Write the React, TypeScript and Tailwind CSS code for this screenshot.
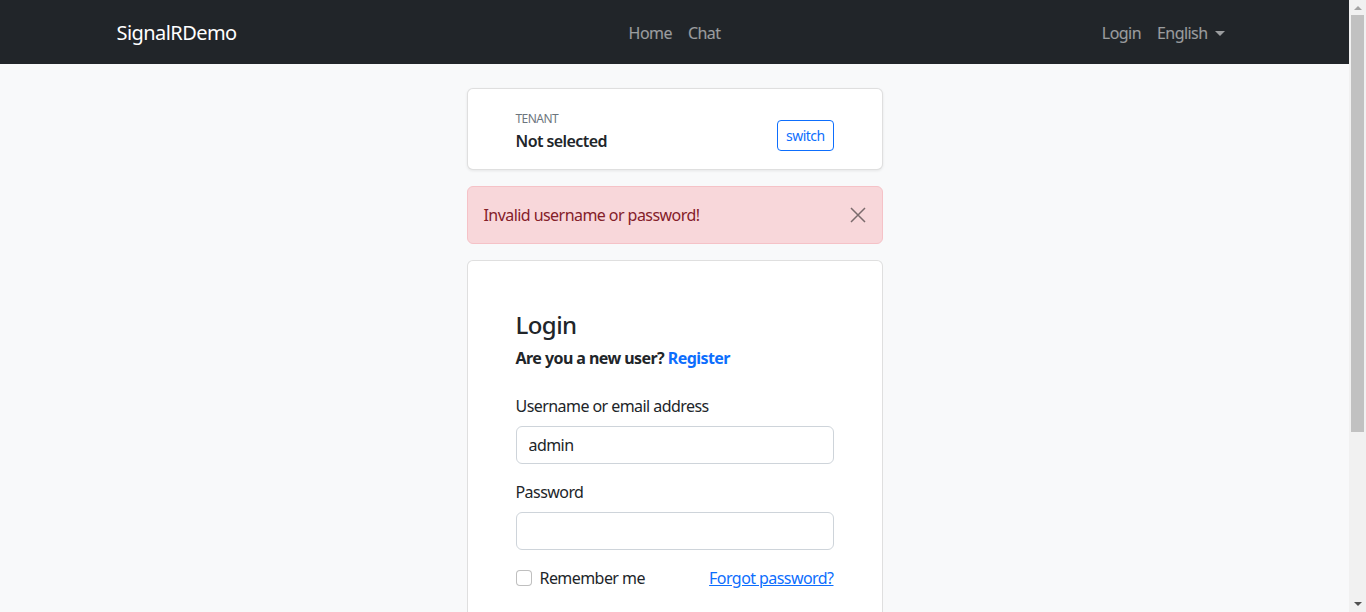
import { useState } from "react";

function NavBar() {
  return (
    <nav className="h-16 bg-[#212529]">
      <div className="mx-auto grid h-full max-w-[1140px] grid-cols-[1fr_auto_1fr] items-center px-3 pt-[2px]">
        <a href="#" className="justify-self-start text-[20px] leading-[30px] text-white">
          SignalRDemo
        </a>
        <ul className="flex items-center">
          <li>
            <a href="#" className="px-2 text-[16px] text-white/55">
              Home
            </a>
          </li>
          <li>
            <a href="#" className="px-2 text-[16px] text-white/55">
              Chat
            </a>
          </li>
        </ul>
        <ul className="flex items-center justify-self-end">
          <li>
            <a href="#" className="px-2 text-[16px] text-white/55">
              Login
            </a>
          </li>
          <li>
            <a href="#" className="flex items-center px-2 text-[16px] text-white/55">
              English
              <span className="ml-[7px] mt-[1px] h-0 w-0 border-x-[5px] border-t-[5px] border-x-transparent border-t-white/55" />
            </a>
          </li>
        </ul>
      </div>
    </nav>
  );
}

function TenantCard() {
  return (
    <div className="mb-4 rounded-md border border-black/[0.125] bg-white shadow-[0_1px_3px_rgba(0,0,0,0.08)]">
      <div className="flex items-end justify-between px-12 pb-4 pt-[21px]">
        <div>
          <div className="text-[12px] uppercase leading-[18px] text-[#6c757d]">Tenant</div>
          <div className="mt-[1px] text-[16px] font-semibold leading-[24px] text-[#212529]">
            Not selected
          </div>
        </div>
        <button
          type="button"
          className="mb-[2px] rounded-[4px] border border-[#0d6efd] px-2 py-1 text-[14px] leading-[21px] text-[#0d6efd]"
        >
          switch
        </button>
      </div>
    </div>
  );
}

function ErrorAlert() {
  const [open, setOpen] = useState(true);
  if (!open) return null;
  return (
    <div className="mb-4 flex items-center justify-between rounded-md border border-[#f5c2c7] bg-[#f8d7da] p-4 text-[16px] leading-[24px] text-[#842029]">
      <span>Invalid username or password!</span>
      <button type="button" onClick={() => setOpen(false)} className="p-0 opacity-50">
        <svg width="16" height="16" viewBox="0 0 16 16" fill="none" stroke="#000" strokeWidth="1.5">
          <path d="M1 1l14 14M15 1L1 15" />
        </svg>
      </button>
    </div>
  );
}

function LoginCard() {
  return (
    <div className="rounded-md border border-black/[0.125] bg-white">
      <div className="p-12">
        <h4 className="mb-[7px] mt-[1px] text-[24px] font-medium leading-[29px] text-[#212529]">Login</h4>
        <p className="mb-6 text-[16px] font-bold leading-[24px] text-[#212529]">
          Are you a new user?{" "}
          <a href="#" className="text-[#0d6efd]">
            Register
          </a>
        </p>
        <form onSubmit={(e) => e.preventDefault()}>
          <div className="mb-4">
            <label className="mb-2 block text-[16px] leading-[24px] text-[#212529]">
              Username or email address
            </label>
            <input
              defaultValue="admin"
              className="block h-[38px] w-full rounded-md border border-[#ced4da] px-3 text-[16px] text-[#212529] outline-none"
            />
          </div>
          <div className="mb-4">
            <label className="mb-2 block text-[16px] leading-[24px] text-[#212529]">Password</label>
            <input
              type="password"
              className="block h-[38px] w-full rounded-md border border-[#ced4da] px-3 text-[16px] text-[#212529] outline-none"
            />
          </div>
          <div className="flex items-center justify-between">
            <label className="flex items-center text-[16px] leading-[24px] text-[#212529]">
              <span className="mr-2 inline-block h-4 w-4 rounded-[4px] border border-black/25 bg-white" />
              Remember me
            </label>
            <a href="#" className="text-[16px] leading-[24px] text-[#0d6efd] underline">
              Forgot password?
            </a>
          </div>
          <button
            type="submit"
            className="mt-8 h-12 w-full rounded-lg bg-[#0d6efd] text-[20px] text-white"
          >
            Login
          </button>
        </form>
      </div>
    </div>
  );
}

function ScrollTrack() {
  return (
    <div className="flex h-screen w-[17px] shrink-0 flex-col bg-[#f1f1f1]">
      <div className="flex h-[15px] items-center justify-center">
        <span className="h-0 w-0 border-x-[4px] border-b-[4px] border-x-transparent border-b-[#a3a3a3]" />
      </div>
      <div className="mx-[2px] h-[417px] bg-[#c1c1c1]" />
      <div className="flex-1" />
      <div className="flex h-[17px] items-center justify-center">
        <span className="h-0 w-0 border-x-[4px] border-t-[4px] border-x-transparent border-t-[#505050]" />
      </div>
    </div>
  );
}

export default function App() {
  return (
    <div className="flex h-screen overflow-hidden bg-[#f8f9fa] font-['Noto_Sans',sans-serif] tracking-[-0.035em]">
      <div className="min-w-0 flex-1 overflow-hidden">
        <NavBar />
        <main className="mx-auto w-[416px] pb-40 pt-6">
          <TenantCard />
          <ErrorAlert />
          <LoginCard />
        </main>
      </div>
      <ScrollTrack />
    </div>
  );
}
